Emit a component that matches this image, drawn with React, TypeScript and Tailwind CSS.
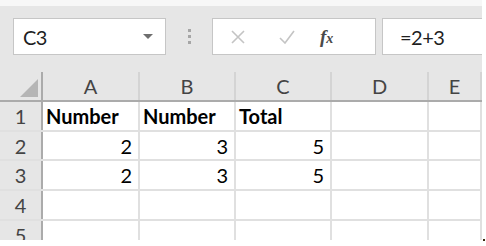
import React from 'react';

const cols = [
  { key: 'A', w: 'w-[97px]' },
  { key: 'B', w: 'w-[96px]' },
  { key: 'C', w: 'w-[96px]' },
  { key: 'D', w: 'w-[97px]' },
  { key: 'E', w: 'flex-1' },
];

const rows: { n: number; cells: string[]; bold?: boolean; h: string }[] = [
  { n: 1, cells: ['Number', 'Number', 'Total', '', ''], bold: true, h: 'h-[30px]' },
  { n: 2, cells: ['2', '3', '5', '', ''], h: 'h-[29px]' },
  { n: 3, cells: ['2', '3', '5', '', ''], h: 'h-[30px]' },
  { n: 4, cells: ['', '', '', '', ''], h: 'h-[30px]' },
  { n: 5, cells: ['', '', '', '', ''], h: 'h-[30px]' },
];

const font = { fontFamily: 'Lato, "Open Sans", sans-serif' };

const App = () => {
  return (
    <div className="relative w-[486px] h-[246px] bg-white" style={font}>
      <div className="w-[482px] h-[240px] overflow-hidden flex flex-col bg-[#e6e6e6]">
        <div className="h-[6px] shrink-0 bg-[#f7f7f7]" />

        {/* toolbar: name box + formula bar */}
        <div className="h-[66px] shrink-0 flex items-start pt-[12px] pl-[13px]">
          <div className="w-[153px] h-[37px] bg-white border border-[#c6c6c6] flex items-center justify-between pl-[9px] pr-[12px]">
            <span className="text-[20px] text-[#1f1f1f] tracking-[-0.5px]">C3</span>
            <span className="w-0 h-0 border-l-[5px] border-r-[5px] border-t-[5px] border-l-transparent border-r-transparent border-t-[#6e6e6e]" />
          </div>
          <div className="w-[46px] h-[37px] flex flex-col items-center justify-center gap-[3px]">
            <span className="w-[3px] h-[3px] bg-[#a6a6a6]" />
            <span className="w-[3px] h-[3px] bg-[#a6a6a6]" />
            <span className="w-[3px] h-[3px] bg-[#a6a6a6]" />
          </div>
          <div className="w-[164px] h-[37px] bg-white border border-[#c6c6c6] flex items-center">
            <svg width="14" height="14" viewBox="0 0 14 14" className="ml-[18px]">
              <path d="M1 1 L13 13 M13 1 L1 13" stroke="#c4c4c4" strokeWidth="1.6" fill="none" />
            </svg>
            <svg width="16" height="14" viewBox="0 0 16 14" className="ml-[34px]">
              <path d="M1 8 L6 13 L15 1" stroke="#c4c4c4" strokeWidth="1.6" fill="none" />
            </svg>
            <span
              className="ml-[25px] text-[19px] italic font-bold text-[#4a4a4a] leading-none"
              style={{ fontFamily: '"Liberation Serif", serif' }}
            >
              f<span className="text-[14px]">x</span>
            </span>
          </div>
          <div className="ml-[6px] flex-1 h-[37px] bg-white border border-[#c6c6c6] border-r-0 flex items-center pl-[17px]">
            <span className="text-[20px] text-[#1f1f1f] tracking-[-0.5px]">=2+3</span>
          </div>
        </div>

        {/* column headers */}
        <div className="h-[30px] shrink-0 flex border-b-2 border-[#ababab]">
          <div className="w-[43px] border-r-2 border-[#ababab] relative">
            <svg width="43" height="28" viewBox="0 0 43 28" className="absolute left-0 top-0">
              <path d="M20 25 L38 25 L38 7 Z" fill="#b5b5b5" />
            </svg>
          </div>
          {cols.map(c => (
            <div key={c.key} className={`${c.w} border-r-2 border-[#d4d4d4] flex items-center justify-center text-[20px] text-[#444]`}>
              {c.key}
            </div>
          ))}
        </div>

        {/* rows */}
        <div className="shrink-0 bg-white">
          {rows.map(r => (
            <div key={r.n} className={`${r.h} flex border-b-2 border-[#e0e0e0]`}>
              <div className="w-[43px] bg-[#e6e6e6] border-r-2 border-[#ababab] flex items-center justify-center text-[20px] text-[#444]">
                {r.n}
              </div>
              {cols.map((c, i) => (
                <div
                  key={c.key}
                  className={`${c.w} border-r-2 border-[#e0e0e0] flex items-center text-[20px] text-black ${
                    r.bold ? 'font-bold justify-start pl-[3px]' : 'justify-end pr-[6px]'
                  }`}
                >
                  {r.cells[i]}
                </div>
              ))}
            </div>
          ))}
        </div>
      </div>
      <span className="absolute left-[483px] top-[239px] w-[2px] h-[2px] bg-[#3a2a10]" />
    </div>
  );
};

export default App;
